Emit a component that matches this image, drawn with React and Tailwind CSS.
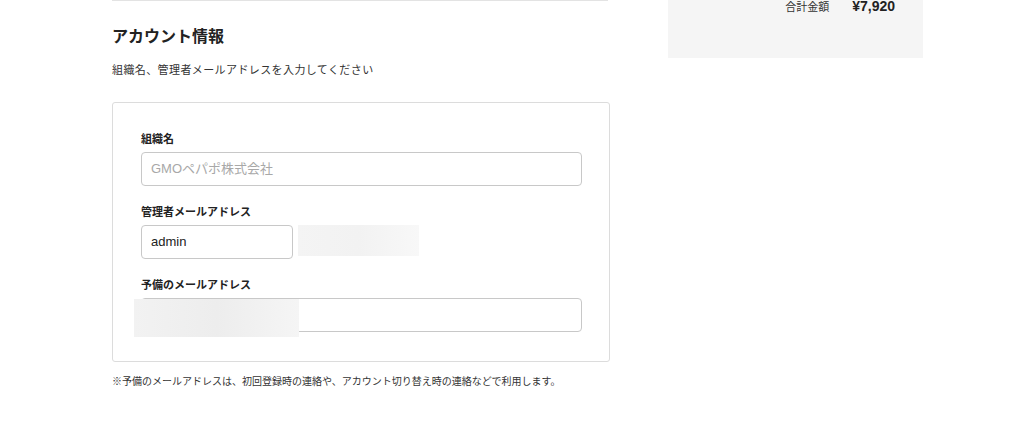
export default function App() {
  const font = { fontFamily: '"Noto Sans CJK JP", "Liberation Sans", sans-serif' };
  return (
    <div className="w-[1024px] h-[441px] bg-white flex pl-[112px] text-[#333]" style={font}>
      <div className="w-[498px] flex flex-col">
        <div className="w-[496px] h-px bg-[#e3e3e3]" />
        <h2 className="mt-[22px] text-[16px] leading-[24px] font-bold text-[#222]">アカウント情報</h2>
        <p className="mt-[14px] text-[11px] leading-[16px] tracking-[0.4px] text-[#333]">組織名、管理者メールアドレスを入力してください</p>
        <div className="mt-[25px] border border-[#dcdcdc] rounded-[3px] h-[260px] px-[28px] pt-[27px] relative">
          <div className="text-[11px] leading-[16px] font-bold text-[#222]">組織名</div>
          <div className="mt-[6px] h-[34px] w-[441px] border border-[#c8c8c8] rounded-[4px] flex items-center pl-[9px] text-[13px] text-[#a8a8a8]" style={{ fontFamily: '"Liberation Sans", "Noto Sans CJK JP", sans-serif' }}>
            GMOペパポ株式会社
          </div>
          <div className="mt-[17px] text-[11px] leading-[16px] font-bold text-[#222]">管理者メールアドレス</div>
          <div className="mt-[6px] flex items-start">
            <div className="h-[34px] w-[152px] border border-[#c8c8c8] rounded-[4px] flex items-center pl-[9px] text-[13px] text-[#222]" style={{ fontFamily: '"Liberation Sans", sans-serif' }}>
              admin
            </div>
            <div className="ml-[5px] w-[121px] h-[31px] bg-gradient-to-r from-[#f4f4f4] via-[#f2f2f2] to-[#f8f8f8]" />
          </div>
          <div className="mt-[17px] text-[11px] leading-[16px] font-bold text-[#222]">予備のメールアドレス</div>
          <div className="mt-[6px] h-[34px] w-[441px] border border-[#c8c8c8] rounded-[4px]" />
          <div className="absolute left-[21px] top-[196px] w-[165px] h-[38px] bg-gradient-to-r from-[#f2f2f2] via-[#ededed] to-[#f5f5f5]" />
        </div>
        <p className="mt-[12px] text-[10px] leading-[14px] text-[#333]">※予備のメールアドレスは、初回登録時の連絡や、アカウント切り替え時の連絡などで利用します。</p>
      </div>
      <div className="ml-[58px] w-[255px] h-[58px] bg-[#f5f5f5] flex items-start justify-end pr-[28px]">
        <div className="flex items-baseline gap-[23px] -mt-[3px]">
          <span className="text-[11px] leading-[16px] text-[#333]">合計金額</span>
          <span className="text-[14px] leading-[18px] font-bold text-[#222]" style={{ fontFamily: '"Liberation Sans", sans-serif' }}>¥7,920</span>
        </div>
      </div>
    </div>
  );
}
